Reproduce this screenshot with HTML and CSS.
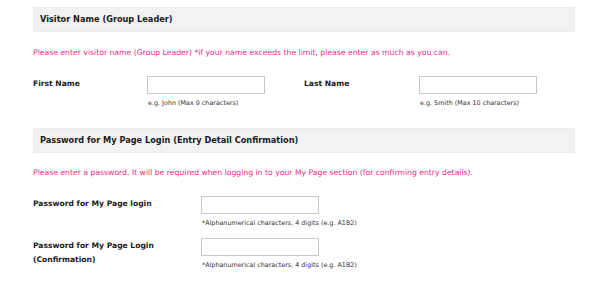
FILE: index.html
```html
<!DOCTYPE html>
<html>
<head>
<meta charset="utf-8">
<link rel="stylesheet" href="styles.css">
</head>
<body>
<div class="form">
  <section class="section">
    <h2 class="section-title">Visitor Name (Group Leader)</h2>
    <p class="notice">Please enter visitor name (Group Leader) *if your name exceeds the limit, please enter as much as you can.</p>
    <div class="row row-name">
      <div class="field">
        <label class="label label-first">First Name</label>
        <div class="control">
          <input class="input" type="text">
          <div class="hint">e.g. John (Max 9 characters)</div>
        </div>
      </div>
      <div class="field">
        <label class="label label-last">Last Name</label>
        <div class="control">
          <input class="input" type="text">
          <div class="hint">e.g. Smith (Max 10 characters)</div>
        </div>
      </div>
    </div>
  </section>
  <section class="section section-2">
    <h2 class="section-title">Password for My Page Login (Entry Detail Confirmation)</h2>
    <p class="notice">Please enter a password. It will be required when logging in to your My Page section (for confirming entry details).</p>
    <div class="row row-pw">
      <label class="label label-pw">Password for My Page login</label>
      <div class="control">
        <input class="input" type="password">
        <div class="hint">*Alphanumerical characters, 4 digits (e.g. A1B2)</div>
      </div>
    </div>
    <div class="row row-pw row-pw2">
      <label class="label label-pw">Password for My Page Login<br>(Confirmation)</label>
      <div class="control">
        <input class="input" type="password">
        <div class="hint">*Alphanumerical characters, 4 digits (e.g. A1B2)</div>
      </div>
    </div>
  </section>
</div>
</body>
</html>
```

FILE: styles.css
```css
* { box-sizing: border-box; }
html, body { margin: 0; padding: 0; background: #fff; }
body {
  font-family: "DejaVu Sans", Verdana, sans-serif;
  color: #222;
  overflow: hidden;
}
.form {
  width: 542px;
  margin-left: 33px;
  padding-top: 7px;
}
.section-title {
  margin: 0;
  height: 25px;
  background: #f2f2f2;
  border: 1px solid #ededed;
  padding-left: 6px;
  font-size: 8.2px;
  font-weight: bold;
  line-height: 23px;
  color: #1a1a1a;
}
.notice {
  margin: 15px 0 0;
  font-size: 7.7px;
  line-height: 12px;
  color: #ea2a86;
}
.row {
  display: flex;
  align-items: flex-start;
}
.row-name { margin-top: 17px; }
.field { display: flex; align-items: flex-start; }
.label {
  display: block;
  font-size: 7.6px;
  font-weight: bold;
  line-height: 14px;
  color: #1a1a1a;
  padding-top: 1px;
}
.label-first { width: 114px; }
.label-last { width: 115px; margin-left: 39px; }
.label-pw { width: 168px; }
.control { display: flex; flex-direction: column; }
.input {
  display: block;
  width: 118px;
  height: 18px;
  margin: 0;
  border: 1px solid #c8c8c8;
  background: #fff;
  border-radius: 0;
  padding: 0 4px;
  outline: none;
}
.hint {
  margin-top: 4px;
  padding-left: 1px;
  font-size: 6.4px;
  line-height: 10px;
  color: #333;
}
.section-2 { margin-top: 20px; }
.section-2 .notice { margin-top: 14px; }
.row-pw { margin-top: 17px; }
.row-pw .label { padding-top: 1px; }
.row-pw2 { margin-top: 10px; }
```
